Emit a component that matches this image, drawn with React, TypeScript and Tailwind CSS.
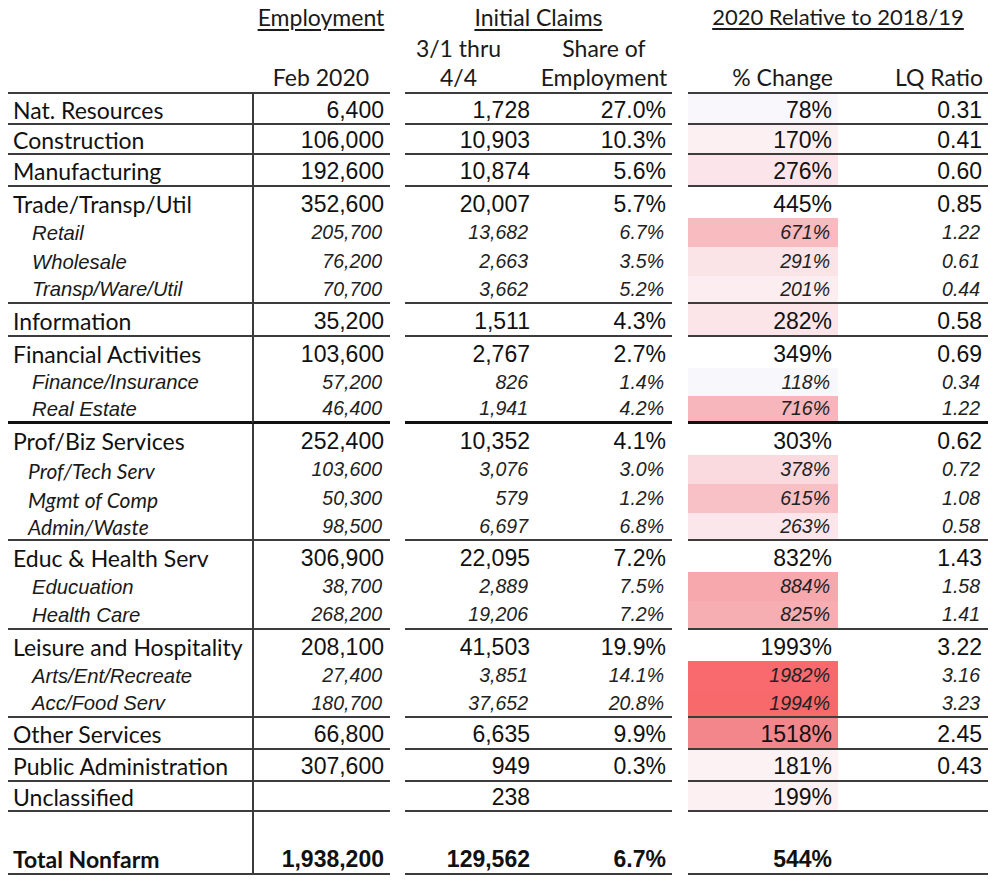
import React from "react";

type Kind = "main" | "sub" | "subc" | "total";
type Line = "none" | "thin" | "thick";
type Row = {
  label: string;
  emp: string;
  claims: string;
  share: string;
  pct: string;
  lq: string;
  kind: Kind;
  h: string;
  line: Line;
  bg: string;
};

const rows: Row[] = [
  { label: "Nat. Resources", emp: "6,400", claims: "1,728", share: "27.0%", pct: "78%", lq: "0.31", kind: "main", h: "h-[31px]", line: "thin", bg: "bg-[#f9f7fb]" },
  { label: "Construction", emp: "106,000", claims: "10,903", share: "10.3%", pct: "170%", lq: "0.41", kind: "main", h: "h-[30px]", line: "thin", bg: "bg-[#fcf0f3]" },
  { label: "Manufacturing", emp: "192,600", claims: "10,874", share: "5.6%", pct: "276%", lq: "0.60", kind: "main", h: "h-[32px]", line: "thin", bg: "bg-[#fbe5ea]" },
  { label: "Trade/Transp/Util", emp: "352,600", claims: "20,007", share: "5.7%", pct: "445%", lq: "0.85", kind: "main", h: "h-[31px]", line: "none", bg: "bg-white" },
  { label: "Retail", emp: "205,700", claims: "13,682", share: "6.7%", pct: "671%", lq: "1.22", kind: "sub", h: "h-[29px]", line: "none", bg: "bg-[#f7bbc0]" },
  { label: "Wholesale", emp: "76,200", claims: "2,663", share: "3.5%", pct: "291%", lq: "0.61", kind: "sub", h: "h-[29px]", line: "none", bg: "bg-[#fbe4e8]" },
  { label: "Transp/Ware/Util", emp: "70,700", claims: "3,662", share: "5.2%", pct: "201%", lq: "0.44", kind: "sub", h: "h-[28px]", line: "thin", bg: "bg-[#fcedf0]" },
  { label: "Information", emp: "35,200", claims: "1,511", share: "4.3%", pct: "282%", lq: "0.58", kind: "main", h: "h-[33px]", line: "thin", bg: "bg-[#fbe5e9]" },
  { label: "Financial Activities", emp: "103,600", claims: "2,767", share: "2.7%", pct: "349%", lq: "0.69", kind: "main", h: "h-[31px]", line: "none", bg: "bg-white" },
  { label: "Finance/Insurance", emp: "57,200", claims: "826", share: "1.4%", pct: "118%", lq: "0.34", kind: "sub", h: "h-[28px]", line: "none", bg: "bg-[#f8f7fb]" },
  { label: "Real Estate", emp: "46,400", claims: "1,941", share: "4.2%", pct: "716%", lq: "1.22", kind: "sub", h: "h-[28px]", line: "thick", bg: "bg-[#f7b6bb]" },
  { label: "Prof/Biz Services", emp: "252,400", claims: "10,352", share: "4.1%", pct: "303%", lq: "0.62", kind: "main", h: "h-[31px]", line: "none", bg: "bg-white" },
  { label: "Prof/Tech Serv", emp: "103,600", claims: "3,076", share: "3.0%", pct: "378%", lq: "0.72", kind: "subc", h: "h-[29px]", line: "none", bg: "bg-[#fadadf]" },
  { label: "Mgmt of Comp", emp: "50,300", claims: "579", share: "1.2%", pct: "615%", lq: "1.08", kind: "subc", h: "h-[29px]", line: "none", bg: "bg-[#f8c1c6]" },
  { label: "Admin/Waste", emp: "98,500", claims: "6,697", share: "6.8%", pct: "263%", lq: "0.58", kind: "subc", h: "h-[28px]", line: "thin", bg: "bg-[#fbe7eb]" },
  { label: "Educ & Health Serv", emp: "306,900", claims: "22,095", share: "7.2%", pct: "832%", lq: "1.43", kind: "main", h: "h-[31px]", line: "none", bg: "bg-white" },
  { label: "Educuation", emp: "38,700", claims: "2,889", share: "7.5%", pct: "884%", lq: "1.58", kind: "sub", h: "h-[29px]", line: "none", bg: "bg-[#f6a8ad]" },
  { label: "Health Care", emp: "268,200", claims: "19,206", share: "7.2%", pct: "825%", lq: "1.41", kind: "sub", h: "h-[29px]", line: "thin", bg: "bg-[#f7aeb3]" },
  { label: "Leisure and Hospitality", emp: "208,100", claims: "41,503", share: "19.9%", pct: "1993%", lq: "3.22", kind: "main", h: "h-[31px]", line: "none", bg: "bg-white" },
  { label: "Arts/Ent/Recreate", emp: "27,400", claims: "3,851", share: "14.1%", pct: "1982%", lq: "3.16", kind: "sub", h: "h-[29px]", line: "none", bg: "bg-[#f86a6d]" },
  { label: "Acc/Food Serv", emp: "180,700", claims: "37,652", share: "20.8%", pct: "1994%", lq: "3.23", kind: "sub", h: "h-[28px]", line: "thin", bg: "bg-[#f8696b]" },
  { label: "Other Services", emp: "66,800", claims: "6,635", share: "9.9%", pct: "1518%", lq: "2.45", kind: "main", h: "h-[32px]", line: "thin", bg: "bg-[#f2868b]" },
  { label: "Public Administration", emp: "307,600", claims: "949", share: "0.3%", pct: "181%", lq: "0.43", kind: "main", h: "h-[32px]", line: "thin", bg: "bg-[#fcf1f3]" },
  { label: "Unclassified", emp: "", claims: "238", share: "", pct: "199%", lq: "", kind: "main", h: "h-[30px]", line: "thin", bg: "bg-[#fcf0f2]" },
  { label: "Total Nonfarm", emp: "1,938,200", claims: "129,562", share: "6.7%", pct: "544%", lq: "", kind: "total", h: "h-[63px]", line: "thin", bg: "bg-white" },
];

const GRID = "grid grid-cols-[244px_138px_15px_131px_136px_16px_150px_150px] ml-[8px]";
const HEAD = "font-['Lato',sans-serif] text-[23px] leading-none text-[#1a1a1a] whitespace-nowrap";

function lineCls(line: Line): string {
  if (line === "thin") return "border-b-2 border-b-[#3c3c3c]";
  if (line === "thick") return "border-b-[3px] border-b-[#111111]";
  return "";
}

function labelCls(kind: Kind): string {
  if (kind === "main") return "pl-[5px] font-['Lato',sans-serif] text-[23px] text-[#111]";
  if (kind === "sub") return "pl-[24px] font-['Liberation_Sans',Arial,sans-serif] italic text-[20.3px] text-[#1a1a1a]";
  if (kind === "subc") return "pl-[20px] font-['Lato',sans-serif] italic text-[21px] text-[#1a1a1a]";
  return "pl-[5px] font-['Lato',sans-serif] font-bold text-[23px] text-[#111]";
}

function numCls(kind: Kind): string {
  if (kind === "main") return "font-['Liberation_Sans',Arial,sans-serif] text-[23px] text-[#111]";
  if (kind === "total") return "font-['Liberation_Sans',Arial,sans-serif] font-bold text-[23px] text-[#111]";
  return "font-['Liberation_Sans',Arial,sans-serif] italic text-[19.5px] text-[#222]";
}

function DataRow({ r }: { r: Row }) {
  const ln = lineCls(r.line);
  const align =
    r.kind === "total"
      ? "items-end pb-[2px]"
      : r.kind === "main"
      ? "items-center pt-[3px]"
      : "items-center pt-[1px]";
  const nc = numCls(r.kind);
  const numPad = r.kind === "sub" || r.kind === "subc" ? "pr-[8px]" : "pr-[6px]";
  return (
    <div className={`${GRID} ${r.h}`}>
      <div className={`flex ${align} whitespace-nowrap leading-none ${labelCls(r.kind)} ${ln}`}>{r.label}</div>
      <div className={`flex ${align} justify-end leading-none border-l-2 border-l-[#3c3c3c] ${numPad} ${nc} ${ln}`}>{r.emp}</div>
      <div />
      <div className={`flex ${align} justify-end leading-none ${numPad} ${nc} ${ln}`}>{r.claims}</div>
      <div className={`flex ${align} justify-end leading-none ${numPad} ${nc} ${ln}`}>{r.share}</div>
      <div />
      <div className={`flex ${align} justify-end leading-none ${numPad} ${nc} ${r.bg} ${ln}`}>{r.pct}</div>
      <div className={`flex ${align} justify-end leading-none ${numPad} ${nc} ${ln}`}>{r.lq}</div>
    </div>
  );
}

export default function App() {
  const hb = "border-b-2 border-b-[#3c3c3c]";
  return (
    <div className="w-[993px] h-[883px] bg-white overflow-hidden">
      <div className={`${GRID} grid-rows-[32px_30px_31px] pt-[1px]`}>
        {/* row 1 */}
        <div />
        <div className={`flex items-center justify-center ${HEAD}`}>
          <span className="underline decoration-[1.5px] underline-offset-[3px]">Employment</span>
        </div>
        <div />
        <div className={`col-span-2 flex items-center justify-center ${HEAD}`}>
          <span className="underline decoration-[1.5px] underline-offset-[3px]">Initial Claims</span>
        </div>
        <div />
        <div className={`col-span-2 flex items-center justify-center ${HEAD}`}>
          <span className="underline decoration-[1.5px] underline-offset-[3px] text-[22px]">2020 Relative to 2018/19</span>
        </div>
        {/* row 2 */}
        <div />
        <div />
        <div />
        <div className={`flex items-center justify-center pr-[24px] ${HEAD}`}>3/1 thru</div>
        <div className={`flex items-center justify-center ${HEAD}`}>Share of</div>
        <div />
        <div />
        <div />
        {/* row 3 */}
        <div className={hb} />
        <div className={`flex items-center justify-center ${HEAD} ${hb}`}>Feb 2020</div>
        <div />
        <div className={`flex items-center justify-center pr-[24px] ${HEAD} ${hb}`}>4/4</div>
        <div className={`flex items-center justify-center ${HEAD} ${hb}`}>Employment</div>
        <div />
        <div className={`flex items-center justify-end pr-[5px] ${HEAD} ${hb}`}>% Change</div>
        <div className={`flex items-center justify-end pr-[5px] ${HEAD} ${hb}`}>LQ Ratio</div>
      </div>
      {rows.map((r, i) => (
        <DataRow key={i} r={r} />
      ))}
    </div>
  );
}
